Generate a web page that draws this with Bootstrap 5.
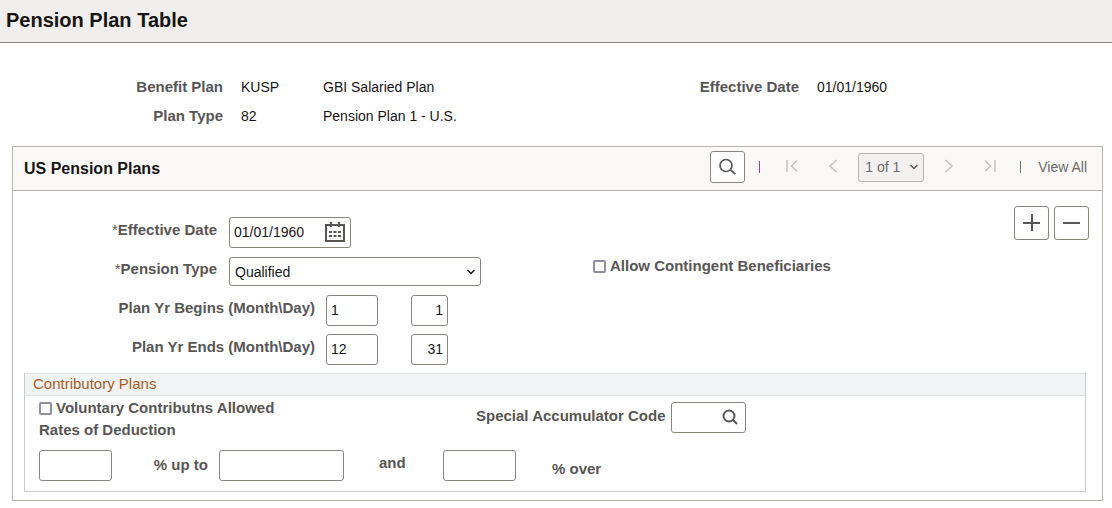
<!DOCTYPE html>
<html lang="en">
<head>
<meta charset="utf-8">
<meta name="viewport" content="width=device-width, initial-scale=1">
<title>Pension Plan Table</title>
<link href="https://cdn.jsdelivr.net/npm/bootstrap@5.3.0/dist/css/bootstrap.min.css" rel="stylesheet">
<style>
  body { font-family: "Liberation Sans", Arial, sans-serif; font-size: 14px; line-height: 20px; color: #161513; background: #fff; }
  .page-head { background: #f0efed; border-bottom: 1px solid #8b8580; padding: 8px 6px 10px; }
  .page-head h1 { font-size: 20px; line-height: 24px; font-weight: 700; margin: 0; }
  .lbl { font-size: 15px; font-weight: 700; color: #585654; white-space: nowrap; }
  .lbl .req { font-weight: 400; }

  .summary { display: grid; grid-template-columns: 223px 64px minmax(0, 357px) 101px auto; column-gap: 18px; grid-auto-rows: 29px; align-items: center; margin: 29px 0 16px; }
  .summary dt, .summary dd { margin: 0; }
  .summary dt { text-align: right; }

  .plan-panel { border: 1px solid #b9b5ae; margin: 0 9px 8px 12px; }
  .plan-head { background: #faf9f7; border-bottom: 1px solid #b9b5ae; min-height: 44px; padding: 0 15px 3px 11px; }
  .plan-head h2 { font-size: 16px; line-height: 20px; font-weight: 700; margin: 3px 0 0; }
  .pager { color: #6b6966; }
  .pager .step { border: 0; background: none; padding: 0 0 2px; width: 41px; height: 28px; color: #c4c2bf; }
  .pager .step svg { display: block; margin: 0 auto; }
  .pager select { appearance: none; width: 66px; height: 29px; padding: 0 6px; border: 1px solid #b8b5b1; border-radius: 3px; color: #6b6966; opacity: 1; font-size: 14px; margin: 0 4px 0 5px;
    background: #f3f2f1 url("data:image/svg+xml,%3Csvg xmlns='http://www.w3.org/2000/svg' width='8' height='6' fill='none' stroke='%23585654' stroke-width='1.5'%3E%3Cpath d='M.5 1 4 4.500 7.500 1'/%3E%3C/svg%3E") no-repeat right 5px center; }
  .pager a { color: #6b6966; text-decoration: none; }
  .rule { width: 1px; height: 12px; background: #8a4a86; margin: 0 11px 0 14px; }
  .rule-end { background: #66805c; margin: 0 17px 0 10px; }

  .tool-btn { width: 35px; height: 34px; border: 1px solid #8b8580; border-radius: 3px; background: #fff; color: #585654; padding: 0; display: flex; align-items: center; justify-content: center; }
  .find-btn { height: 32px; }
  .row-tools { gap: 5px; }

  .field { height: 31px; border: 1px solid #8b8580; border-radius: 3px; padding: 0 4px 2px; background: #fff; color: #161513; font-size: 14px; min-width: 0; }
  select.field { appearance: none; height: 29px; width: 252px; padding: 0 5px;
    background: #fff url("data:image/svg+xml,%3Csvg xmlns='http://www.w3.org/2000/svg' width='8' height='6' fill='none' stroke='%23161513' stroke-width='1.5'%3E%3Cpath d='M.5 1 4 4.500 7.500 1'/%3E%3C/svg%3E") no-repeat right 5px center; }
  .w-date { width: 122px; }
  .w-month { width: 52px; }
  .w-day { width: 37px; text-align: right; margin-left: 33px; }
  .w-rate { width: 73px; }
  .w-limit { width: 125px; }
  .w-code { width: 75px; }
  .in-field { position: absolute; top: 0; right: 4px; height: 30px; width: 24px; border: 0; background: none; padding: 0; color: #585654; display: flex; align-items: center; justify-content: center; }

  .entry { padding: 15px 13px 8px 11px; }
  .entry-fields { width: 569px; padding-top: 11px; row-gap: 8px; }
  .entry-row { min-height: 31px; }
  .entry-row .lbl { text-align: right; width: 193px; margin-right: 12px; padding-bottom: 6px; }
  .entry-row .lbl-wide { width: 291px; margin-right: 11px; }
  .tick { appearance: none; width: 13px; height: 13px; border: 2px solid #8f8f9d; border-radius: 2px; background: #fff; margin: 0; flex: none; }
  .tick:checked { background: #585654; }
  .tick + .lbl { padding-left: 4px; }
  .contingent { padding-top: 50px; }

  .contrib { border: 1px solid #c9cbcf; border-top: 0; margin: 0 16px 8px 11px; }
  .contrib h3 { background: #f0f4f5; border: solid #e1e3e3; border-width: 1px 0; color: #b0591a; font-size: 15px; line-height: 20px; font-weight: 400; margin: 0; padding: 0 8px 1px; }
  .contrib-body { padding: 1px 14px 10px; }
  .opt-col { width: 437px; line-height: 22px; }
  .code-col { padding-top: 5px; }
  .code-col .lbl { padding: 4px 5px 0 0; }
  .rates { padding-top: 9px; }
  .up-to { width: 96px; text-align: right; margin-right: 11px; padding-bottom: 2px; }
  .and-lbl { width: 64px; margin-left: 35px; padding-bottom: 5px; }
  .over-lbl { margin-left: 36px; padding-top: 6px; }
</style>
</head>
<body>
<header class="page-head"><h1>Pension Plan Table</h1></header>

<main>
  <dl class="summary">
    <dt class="lbl">Benefit Plan</dt><dd>KUSP</dd><dd>GBI Salaried Plan</dd>
    <dt class="lbl">Effective Date</dt><dd>01/01/1960</dd>
    <dt class="lbl">Plan Type</dt><dd>82</dd><dd>Pension Plan 1 - U.S.</dd>
  </dl>

  <section class="plan-panel">
    <div class="plan-head d-flex flex-wrap align-items-center justify-content-between">
      <h2>US Pension Plans</h2>
      <div class="pager d-flex align-items-center">
        <button type="button" class="tool-btn find-btn" aria-label="Find">
          <svg width="19" height="20" viewBox="0 0 19 20" fill="none" stroke="#585654" stroke-width="1.7"><circle cx="8" cy="8.500" r="6"/><path d="m12.300 12.600 5 4.600"/></svg>
        </button>
        <span class="rule"></span>
        <button type="button" class="step" disabled aria-label="First row">
          <svg width="14" height="14" viewBox="0 0 14 14" fill="none" stroke="currentColor" stroke-width="1.5"><path d="M2 1v12M12 1.500 6.500 7l5.500 5.500"/></svg>
        </button>
        <button type="button" class="step" disabled aria-label="Previous row">
          <svg width="14" height="14" viewBox="0 0 14 14" fill="none" stroke="currentColor" stroke-width="1.5"><path d="M10.500 1 4 7l6.500 6"/></svg>
        </button>
        <select disabled aria-label="Row"><option>1 of 1</option></select>
        <button type="button" class="step" disabled aria-label="Next row">
          <svg width="14" height="14" viewBox="0 0 14 14" fill="none" stroke="currentColor" stroke-width="1.5"><path d="M3.500 1 10 7l-6.500 6"/></svg>
        </button>
        <button type="button" class="step" disabled aria-label="Last row">
          <svg width="14" height="14" viewBox="0 0 14 14" fill="none" stroke="currentColor" stroke-width="1.5"><path d="M12 1v12M2 1.500 7.500 7 2 12.500"/></svg>
        </button>
        <span class="rule rule-end"></span>
        <a href="#">View All</a>
      </div>
    </div>

    <form>
      <div class="entry d-flex align-items-start">
        <div class="entry-fields d-flex flex-column">
          <div class="entry-row d-flex align-items-center">
            <label class="lbl" for="effdt"><span class="req">*</span>Effective Date</label>
            <div class="position-relative">
              <input class="field w-date d-block" id="effdt" type="text" value="01/01/1960">
              <button type="button" class="in-field" aria-label="Choose a date">
                <svg width="20" height="20" viewBox="0 0 20 20"><path d="M1 3h18v16H1z" fill="none" stroke="currentColor" stroke-width="2"/><path d="M5 0h2v5H5zM13 0h2v5h-2zM4 9h3v2H4zM8.500 9h3v2h-3zM13 9h3v2h-3zM4 13h3v2H4zM8.500 13h3v2h-3zM13 13h3v2h-3z" fill="currentColor"/></svg>
              </button>
            </div>
          </div>
          <div class="entry-row d-flex align-items-center">
            <label class="lbl" for="ptype"><span class="req">*</span>Pension Type</label>
            <select class="field" id="ptype"><option>Qualified</option></select>
          </div>
          <div class="entry-row d-flex align-items-center">
            <label class="lbl lbl-wide" for="bmonth">Plan Yr Begins (Month\Day)</label>
            <input class="field w-month" id="bmonth" type="text" value="1">
            <input class="field w-day" type="text" value="1" aria-label="Plan year begins, day">
          </div>
          <div class="entry-row d-flex align-items-center">
            <label class="lbl lbl-wide" for="emonth">Plan Yr Ends (Month\Day)</label>
            <input class="field w-month" id="emonth" type="text" value="12">
            <input class="field w-day" type="text" value="31" aria-label="Plan year ends, day">
          </div>
        </div>
        <div class="contingent d-flex align-items-center flex-grow-1">
          <input class="tick" type="checkbox" id="contingent">
          <label class="lbl" for="contingent">Allow Contingent Beneficiaries</label>
        </div>
        <div class="row-tools d-flex">
          <button type="button" class="tool-btn" aria-label="Add a row">
            <svg width="17" height="18" viewBox="0 0 17 18" fill="currentColor"><path d="M0 8h8V0h2v8h7v2h-7v7H8v-7H0z"/></svg>
          </button>
          <button type="button" class="tool-btn" aria-label="Delete row">
            <svg width="17" height="18" viewBox="0 0 17 18" fill="currentColor"><path d="M0 8h17v2H0z"/></svg>
          </button>
        </div>
      </div>

      <div class="contrib">
        <h3>Contributory Plans</h3>
        <div class="contrib-body">
          <div class="d-flex">
            <div class="opt-col">
              <div class="d-flex align-items-center">
                <input class="tick" type="checkbox" id="voluntary">
                <label class="lbl" for="voluntary">Voluntary Contributns Allowed</label>
              </div>
              <div class="lbl">Rates of Deduction</div>
            </div>
            <div class="code-col d-flex align-items-start">
              <label class="lbl" for="acode">Special Accumulator Code</label>
              <div class="position-relative">
                <input class="field w-code d-block" id="acode" type="text">
                <button type="button" class="in-field" aria-label="Look up code">
                  <svg width="16" height="16" viewBox="0 0 16 16" fill="none" stroke="currentColor" stroke-width="2"><circle cx="7" cy="7" r="5.500"/><path d="m11 11 4 4"/></svg>
                </button>
              </div>
            </div>
          </div>
          <div class="rates d-flex align-items-center">
            <input class="field w-rate" type="text" id="rate1" aria-label="First rate">
            <label class="lbl up-to" for="limit">% up to</label>
            <input class="field w-limit" type="text" id="limit">
            <label class="lbl and-lbl" for="rate2">and</label>
            <input class="field w-rate" type="text" id="rate2">
            <span class="lbl over-lbl">% over</span>
          </div>
        </div>
      </div>
    </form>
  </section>
</main>
<script src="https://cdn.jsdelivr.net/npm/bootstrap@5.3.0/dist/js/bootstrap.bundle.min.js"></script>
</body>
</html>
